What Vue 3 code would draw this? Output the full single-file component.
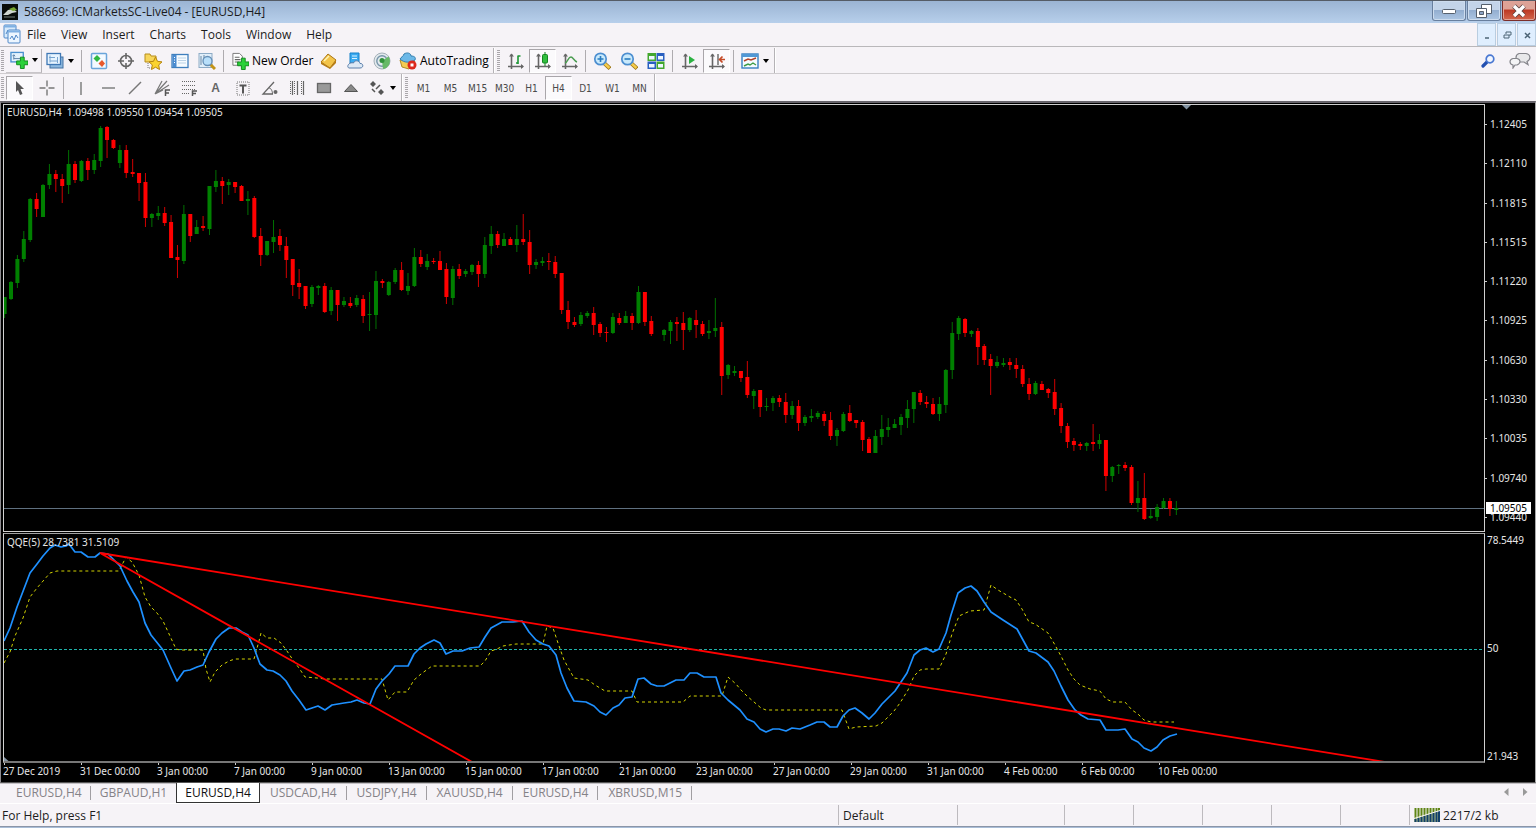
<script setup>
import { ref } from 'vue'

const menus = ['File', 'View', 'Insert', 'Charts', 'Tools', 'Window', 'Help']
const frames = ['M1', 'M5', 'M15', 'M30', 'H1', 'H4', 'D1', 'W1', 'MN']
const frame = ref('H4')
const tabs = ['EURUSD,H4', 'GBPAUD,H1', 'EURUSD,H4', 'USDCAD,H4', 'USDJPY,H4', 'XAUUSD,H4', 'EURUSD,H4', 'XBRUSD,M15']
const activeTab = ref(2)
const prices = ['1.12405', '1.12110', '1.11815', '1.11515', '1.11220', '1.10925', '1.10630', '1.10330', '1.10035', '1.09740', '1.09440']
const dates = ['27 Dec 2019', '31 Dec 00:00', '3 Jan 00:00', '7 Jan 00:00', '9 Jan 00:00', '13 Jan 00:00', '15 Jan 00:00', '17 Jan 00:00', '21 Jan 00:00', '23 Jan 00:00', '27 Jan 00:00', '29 Jan 00:00', '31 Jan 00:00', '4 Feb 00:00', '6 Feb 00:00', '10 Feb 00:00']

// colour, high, body top, body bottom, low; "-" is a bar without a drawn body
const bars = `g297,297,314,318 g281,282,299,300 g255,259,283,288 g231,239,259,262 g198,199,240,242 r193,199,209,217 g184,185,217,217 g164,174,185,189 r170,174,179,192 r174,179,186,203
g150,164,185,194 r161,164,180,183 g160,161,181,182 r158,161,170,180 g154,160,170,174 g126,128,161,167 r126,127,140,158 r139,140,148,149 g145,150,163,168 r145,150,173,178
r159,172,174,177 r173,173,183,201 r173,182,218,227 g213,214,218,227 g206,213,216,220 r207,213,223,226 r215,222,258,258 r245,257,260,278 g205,214,261,264 r214,214,236,242
g220,227,234,234 r216,226,228,231 g186,186,229,235 g170,181,187,192 r177,181,186,204 g179,182,185,195 r182,182,187,193 r185,186,201,201 g191,199,201,215 r196,198,237,238
r228,236,255,266 g241,241,255,256 g220,237,242,253 r229,236,245,251 r237,246,260,278 r259,259,285,296 r269,283,287,299 r286,286,306,309 g285,287,304,307 g285,286,288,295
r283,286,312,313 g287,290,311,315 r290,290,305,321 g297,301,305,307 r297,303,306,308 g295,298,305,307 r295,299,316,323 g292,314,315,331 g271,281,315,329 r279,281,283,288
g281,282,295,296 g268,270,282,284 r262,270,290,291 g273,286,291,295 g248,257,286,287 r250,257,264,267 g254,261,267,270 r258,261,262,264 r251,261,270,270 r263,269,297,304
g266,269,298,305 r264,269,276,279 g269,271,274,277 g264,265,272,275 r261,265,274,287 g237,245,274,278 g226,234,246,254 r231,234,245,248 g233,239,246,246 r237,239,245,245
g225,239,245,252 r214,239,242,245 r230,242,265,274 g259,262,265,269 g257,261,263,266 r253,261,262,270 r256,262,274,278 r273,273,310,314 r301,310,322,329 r317,322,325,327
g312,315,324,326 g311,313,316,318 r307,313,325,335 r322,324,333,337 r327,332,333,342 g313,317,333,334 r313,318,323,325 g311,316,323,323 r313,316,323,330 g286,292,323,324
r292,292,322,326 r316,321,334,336 - g329,330,335,341 g320,322,331,344 r317,322,324,341 r312,323,330,350 g317,318,330,332 r310,320,325,338 r321,324,334,336
g320,331,333,339 g298,328,331,337 r322,327,376,395 g364,365,375,379 g366,371,373,376 r371,371,378,382 r361,377,395,398 g389,391,396,409 r390,390,407,417 g398,406,407,411
g396,398,403,411 r395,398,402,407 r393,402,415,423 g401,406,415,419 r400,406,423,431 g415,417,423,426 g409,416,418,422 g411,413,417,419 r411,414,421,426 r412,420,436,440
g428,430,436,446 g412,414,431,432 r405,413,421,422 r420,420,423,428 r420,422,440,451 r437,439,453,453 g430,436,453,453 g415,429,437,445 g418,427,430,437 g419,424,428,428
g414,417,425,435 g400,409,418,428 g392,392,409,423 r390,393,402,405 r396,402,404,408 r398,404,414,415 g397,404,414,421 g369,370,405,413 g322,333,370,379 g316,318,334,340
r318,319,333,337 g330,331,334,337 r328,331,347,365 r344,346,360,365 r354,359,366,395 g356,362,366,368 g358,363,365,367 r358,362,365,370 r358,365,369,378 r365,369,384,387
r378,384,394,400 g381,383,394,395 r381,384,390,390 r388,389,393,398 r379,392,409,415 r403,408,426,433 r423,426,442,448 r438,441,445,451 r442,444,446,450 g442,443,446,451
r424,442,444,451 g434,440,444,449 r440,440,476,491 g466,467,476,482 g464,465,466,474 r462,465,468,471 r465,467,503,505 g481,498,503,512 r473,498,519,520 g509,516,518,519
g504,507,517,521 g498,501,508,509 r498,501,509,516 g501,508,510,515`

const candles = bars.split(/\s+/).map((bar, i) => {
  if (bar === '-') return null
  const [high, top, bottom, low] = bar.slice(1).split(',').map(Number)
  return { x: 4.6 + i * 6.403, up: bar[0] === 'g', high, top, bottom, low }
}).filter(Boolean)

const fastLine = `4,641 10,628 17,607 30,573 37,564 43,556 50,548 55,545 61,547 66,546 69,544 75,552 81,552 88,557 95,557 100,553 108,554 114,560 120,566 127,581 133,592 139,602 145,623 151,635 163,650 171,668 177,681 184,671 190,670 197,667 203,665 209,652 216,639 222,633 229,628 236,628 242,632 248,635 254,648 260,664 267,670 273,671 280,675 286,681 292,691 299,700 306,710 312,708 318,706 325,710 332,705 338,704 344,703 351,702 357,700 364,703 370,704 376,689 382,681 389,674 395,666 408,666
414,654 420,648 426,644 434,640 440,643 446,654 453,651 462,651 470,648 479,647 485,637 491,628 502,622 513,622 522,621 529,632 536,640 543,644 549,646 556,655 561,673 567,688 574,701 586,702 594,706 600,712 606,715 613,708 619,705 625,698 632,697 638,679 644,678 651,684 657,686 664,686 670,683 676,680 684,680 690,673 697,673 704,677 716,677 721,693 728,700 740,710 747,719 754,722 760,729 766,732 773,729 779,729 786,731 792,728 800,729
810,725 817,722 824,722 830,727 837,727 843,716 849,710 855,708 862,713 869,719 875,713 882,704 895,691 907,673 914,655 920,650 926,648 933,652 939,649 946,633 951,615 958,593 965,588 971,586 977,591 984,602 991,612 1003,620 1017,629 1029,651 1036,653 1048,662 1054,671 1061,686 1068,700 1075,710 1081,715 1088,719 1100,720 1106,730 1118,730 1125,729 1132,739 1138,742 1144,748 1151,751 1157,747 1163,740 1170,736 1177,734`
const slowLine = `4,663 10,652 15,636 23,618 30,597 37,588 50,573 57,571 119,571 126,557 132,562 139,575 145,597 151,607 157,613 163,621 170,636 176,649 180,650 203,650 206,669 210,682 215,672 222,665 229,661 235,659 254,659 259,641 261,633 267,638 274,638 281,643 287,651 293,660 299,668 305,677 317,678 325,679 382,679 388,700 395,692 407,692
414,680 421,674 432,666 480,666 485,661 491,651 497,649 503,646 516,644 543,644 547,626 553,628 558,643 564,660 574,678 588,680 595,685 605,691 632,691 637,702 683,702 690,696 722,696 728,677 736,684 741,690 747,696 754,702 761,708 766,710 842,710 849,729 856,727 876,726 882,723 888,717 894,711 900,703 908,690 914,676 920,670 926,669 939,669 946,654 952,634 959,616 970,611 984,610 991,585 998,590 1010,597 1016,600 1022,609 1029,622 1035,624 1048,633 1055,645 1062,658 1068,670 1074,679 1080,685 1090,689 1100,691 1106,699 1113,702 1125,702 1132,710 1138,714 1144,720 1151,722 1174,722`

const axes = '<path d="M4.5 2v15M1 14.5h15" stroke="#666" stroke-width="1.6" fill="none"/><path d="M2 4.5l2.500-3 2.500 3zM14 12l3 2.500-3 2.500z" fill="#666"/>'
const lens = '<path d="M11 11l6 5.500" stroke="#9b7415" stroke-width="4"/><path d="M11 11l5.500 5" stroke="#f5cc4b" stroke-width="2.400"/><circle cx="7.500" cy="7" r="5.700" fill="#c9e9fb" stroke="#4c8ed0" stroke-width="1.700"/>'
const plus = '<path d="M11 6.500h4v4h4v4h-4v4h-4v-4H7v-4h4z" fill="#2bd13a" stroke="#128a1e"/>'

const icons = {
  addChart: '<rect x="1" y="1.500" width="13" height="10" fill="#e4f2fd" stroke="#4a90cf" stroke-width="1.400"/><path d="M4 4v5m-1.500-3.500L4 4l1.500 1.500M4 8h7" stroke="#5a7fa5" fill="none"/>' + plus,
  profiles: '<rect x="4" y="5" width="13" height="11" fill="#8db9e0" stroke="#4573a3"/><rect x="1" y="1.500" width="13.500" height="11" fill="#e7f4ff" stroke="#3f78b5" stroke-width="1.300"/><path d="M4 3.500v7M11.500 5v6M3 5.500h6M4 9h8" stroke="#78a4cf" fill="none"/>',
  market: '<rect x="1.500" y="1.500" width="15" height="15" rx="1" fill="#f4faff" stroke="#6aa5da" stroke-width="1.500"/><path d="M3.500 6.500l3.500-3.500 3.500 3.500L7 10z" fill="#31b842"/><path d="M8.500 11.500L12 8l3 3.500-3 3.500z" fill="#e8592d"/>',
  crosshairData: '<circle cx="9" cy="9" r="5.500" fill="none" stroke="#666" stroke-width="1.600"/><path d="M9 1v6M9 11v6M1 9h6M11 9h6" stroke="#666" stroke-width="1.600"/>',
  navigator: '<path d="M1 2h5l1 2h5v6H1z" fill="#f7d65b" stroke="#b78d1c"/><path d="M4 11v5h4" stroke="#777" stroke-dasharray="1 1" fill="none"/><path d="M11.500 5l2 4.300 4.500.6-3.300 3 .8 4.600-4-2.300-4 2.300.8-4.600-3.300-3 4.500-.6z" fill="#fbd32f" stroke="#b58410"/>',
  terminal: '<rect x="1" y="2.500" width="16" height="13" fill="#f6fbff" stroke="#3f7fbd" stroke-width="1.300"/><path d="M3.500 3v12" stroke="#4a8bd0" stroke-width="4"/><path d="M3 5.500h1M3 8h1M3 10.500h1" stroke="#fff"/><path d="M7 6h8M7 8.500h8M7 11h8" stroke="#bbd2e6"/>',
  tester: '<rect x="1" y="1.500" width="13" height="14" fill="#e1eef9" stroke="#8dabc6"/><path d="M3 4v9M6 3v8" stroke="#6888a5"/><path d="M12 12l5 5" stroke="#c39418" stroke-width="3"/><circle cx="9.500" cy="9" r="4.500" fill="#b8dffa" stroke="#668fb7" stroke-width="1.300"/>',
  order: '<path d="M2 1.500h7l3 3V14H2z" fill="#fff" stroke="#777"/><path d="M4 5.500h5M4 8h6M4 10.500h4" stroke="#666" stroke-width="1.200"/>' + plus,
  editor: '<path d="M2 10l7-8 8 6-6 8z" fill="#f3c449" stroke="#a97413"/><path d="M2 10l9 6 6-8v3l-6 6-9-5z" fill="#b77c13"/><path d="M5 9l5-5" stroke="#fff3b4" stroke-width="1.500"/>',
  cloud: '<path d="M4 1h9v10H4z" fill="#3baaf0" stroke="#1680c9"/><path d="M6 4h5M6 6.500h5" stroke="#d8f2ff" stroke-width="1.200"/><path d="M3 16h11c4 0 3.500-5 0-4.500C13 8 8.500 8 7.500 11 3 9.500 0 15 3 16z" fill="#dce8f5" stroke="#5a7eaa"/>',
  signals: '<circle cx="9" cy="9" r="8" fill="#e3e9ed" stroke="#a3afb7"/><circle cx="9" cy="9" r="5.200" fill="none" stroke="#7694a8" stroke-width="1.400"/><path d="M9 9l6.500-4.500A8 8 0 0 1 10 17z" fill="#67b967"/><circle cx="9" cy="8.500" r="2.500" fill="#32923c"/>',
  auto: '<path d="M1 8l2 7 7 2 6-8z" fill="#f3cb52" stroke="#b18a23"/><path d="M1 7c1-2 3-2 4-5 3-2 7-1 7 2 4 0 5 2 4 4-5 3-11 3-15-1z" fill="#6bb8e7" stroke="#347ead"/><circle cx="13" cy="13" r="4.500" fill="#dc281c"/><rect x="11.500" y="11.500" width="3" height="3" fill="#fff"/>',
  barChart: axes + '<path d="M9 11h2M11 12V3.500M11 4h2.500" stroke="#1c9634" stroke-width="1.600" fill="none"/>',
  candleChart: axes + '<path d="M11 0v14" stroke="#168523"/><rect x="8.500" y="2.500" width="5" height="8.500" rx="1" fill="#31bf3e" stroke="#168523"/>',
  lineChart: axes + '<path d="M4 11c3-1 3-6 6-6 2 0 3 4 6 5" stroke="#4a9c50" stroke-width="1.400" fill="none"/>',
  zoomIn: lens + '<path d="M4.500 7h6M7.500 4v6" stroke="#287cc0" stroke-width="1.600"/>',
  zoomOut: lens + '<path d="M4.500 7h6" stroke="#287cc0" stroke-width="1.600"/>',
  tile: '<path d="M.5 1h8.500v8H.5zM9.500 9.500h8v7.500h-8z" fill="#42a72d"/><path d="M9.500 1h8v8h-8zM.5 9.500H9V17H.5z" fill="#295fc0"/><path d="M2 4h5.500v3.500H2zM11 4h5v3.500h-5zM2 12h5.500v3.500H2zM11 12h5v3.500h-5z" fill="#eef7ff"/>',
  scroll: axes + '<path d="M8 4l6 4-6 4z" fill="#2bb141"/>',
  shift: axes + '<path d="M10 2v11" stroke="#666" stroke-width="1.400"/><path d="M17 7.500h-5m2.500-3l-3 3 3 3" stroke="#c44a26" stroke-width="1.700" fill="none"/>',
  template: '<rect x="1" y="2" width="16" height="14" fill="#f5fbff" stroke="#377fc1" stroke-width="1.400"/><path d="M1 3.500h16" stroke="#5198d5" stroke-width="3"/><path d="M3 9l4-2 3 1 5-2" stroke="#b34127" stroke-width="1.400" fill="none"/><path d="M3 14l4-2 2 1 3-2 3 2" stroke="#3d9b46" stroke-width="1.400" fill="none"/>',
  cursor: '<path d="M5 2l8 8H9.500l2 5-2.500 1-2-5L5 13z" fill="#555"/>',
  cross: '<path d="M9 1.500v6M9 10.500v6M1.500 9h6M10.500 9h6" stroke="#777" stroke-width="1.400"/>',
  vline: '<path d="M9 3v13" stroke="#777" stroke-width="1.400"/>',
  hline: '<path d="M3 9h13" stroke="#777" stroke-width="1.400"/>',
  trend: '<path d="M3 15L15 3" stroke="#777" stroke-width="1.400"/>',
  fan: '<path d="M2 15L14 2M2 15L16 6M2 15L9 2M2 15l8-4" stroke="#777" stroke-width="1.200"/><path d="M12.500 17v-6H17M12.500 14h3.500" stroke="#555" stroke-width="1.500" fill="none"/>',
  fibo: '<path d="M2 2.500h14M2 6.500h14M2 10.500h14M2 14.500h8" stroke="#666" stroke-dasharray="1 1"/><path d="M12.500 17v-5H17M12.500 14.500h3.500" stroke="#555" stroke-width="1.500" fill="none"/>',
  textBox: '<path d="M3 3h12v13H3z" fill="none" stroke="#777" stroke-dasharray="1 1"/><path d="M5.500 6.500h7M9 6.500v8" stroke="#555" stroke-width="2"/>',
  angle: '<path d="M13 3L2 15h10" stroke="#666" stroke-width="1.300" fill="none"/><path d="M8 9c2 0 3.500 3 3.500 6" stroke="#666" fill="none"/><circle cx="14.500" cy="13" r="2" fill="#666"/>',
  cycles: '<path d="M2.500 2v14M6.500 2v14M13.500 2v14" stroke="#666" stroke-dasharray="1 1"/><path d="M4.500 2v14M9.500 2v14M15.500 2v14" stroke="#666" stroke-width="1.200"/>',
  rectangle: '<rect x="2.500" y="4.500" width="13" height="9" fill="#999" stroke="#666" stroke-width="1.300"/>',
  triangle: '<path d="M2.500 12.500h13L9 5.500z" fill="#888" stroke="#555"/>',
  arrows: '<path d="M5 2l3 3-3 3-3-3zM13 10l3 3-3 3-3-3z" fill="#555"/><path d="M4 10l3 3M8 10l4-4" stroke="#555" stroke-width="1.500" fill="none"/>'
}

const chartTools = [
  ['market', 'Market Watch'], ['crosshairData', 'Data Window'], ['navigator', 'Navigator'], ['terminal', 'Terminal'], ['tester', 'Strategy Tester']
]
const drawTools = [
  ['vline', 'Vertical Line'], ['hline', 'Horizontal Line'], ['trend', 'Trendline'], ['fan', 'Equidistant Channel'], ['fibo', 'Fibonacci Retracement'],
  ['label', 'Text'], ['textBox', 'Text Label'], ['angle', 'Trend by Angle'], ['cycles', 'Cycle Lines'], ['rectangle', 'Rectangle'], ['triangle', 'Triangle']
]
</script>

<template>
  <main class="terminal">
    <header class="title">
      <svg class="logo" width="16" height="16" viewBox="0 0 16 16" aria-hidden="true"><rect width="16" height="16" fill="#080c08" /><path d="M1 11l5-5 5-1 4 3-5 1-4 2z" fill="#cfd6cf" /><path d="M7 5l5-2 3 3-4 1z" fill="#75a52f" /><path d="M2 13h11" stroke="#75807a" /></svg>
      <h1>588669: ICMarketsSC-Live04 - [EURUSD,H4]</h1>
      <div class="window-buttons">
        <button aria-label="Minimize"><svg width="16" height="14" viewBox="0 0 16 14"><rect x="1.500" y="5.500" width="13" height="4" rx="1" fill="#fff" stroke="#56606d" /></svg></button>
        <button aria-label="Restore"><svg width="18" height="16" viewBox="0 0 18 16"><path d="M6.500 1.500h10v9h-10z" fill="#fff" stroke="#56606d" /><path d="M1.500 5.500h10v9h-10z" fill="#fff" stroke="#56606d" /><path d="M4.500 8.500h4v3h-4z" fill="#8ba3c5" stroke="#56606d" /></svg></button>
        <button class="close" aria-label="Close"><svg width="18" height="14" viewBox="0 0 18 14"><path d="M4 2l10 10M14 2L4 12" stroke="#59413f" stroke-width="5" /><path d="M4 2l10 10M14 2L4 12" stroke="#fff" stroke-width="3.400" /></svg></button>
      </div>
    </header>

    <nav class="menu" aria-label="Main menu">
      <svg class="menu-icon" width="18" height="20" viewBox="0 0 18 20" aria-hidden="true"><rect x="1" y="1" width="12" height="13" rx="1" fill="#d7eafc" stroke="#4f87c7" /><path d="M1 2.500h12" stroke="#7fb0e3" stroke-width="2" /><path d="M3 10l2-4 2 3 3-3" stroke="#4f87c7" fill="none" /><rect x="5" y="6" width="12" height="13" rx="1" fill="#edf6ff" stroke="#4f87c7" /><path d="M5 7.500h12" stroke="#7fb0e3" stroke-width="2" /><path d="M7 15l2-3 2 4 2-5 2 3" stroke="#4f87c7" fill="none" /></svg>
      <button v-for="item in menus" :key="item">{{ item }}</button>
      <div class="child-buttons">
        <button aria-label="Minimize chart"><svg width="10" height="10" viewBox="0 0 10 10"><path d="M3 8h4" stroke="#4c6475" stroke-width="1.500" /></svg></button>
        <button aria-label="Restore chart"><svg width="10" height="10" viewBox="0 0 10 10"><path d="M4 4V2h5v3H7M2 5h5v3H2z" stroke="#4c6475" fill="none" /></svg></button>
        <button aria-label="Close chart"><svg width="10" height="10" viewBox="0 0 10 10"><path d="M3 3l5 5M8 3L3 8" stroke="#4c6475" stroke-width="1.500" /></svg></button>
      </div>
    </nav>

    <section class="bar bar-top" aria-label="Standard toolbar">
      <div class="group">
        <i class="grip"></i>
        <button class="tool drop raised" aria-label="New Chart"><svg class="icon" viewBox="0 0 19 19" v-html="icons.addChart"></svg><i class="caret"></i></button>
        <button class="tool drop" aria-label="Profiles"><svg class="icon" viewBox="0 0 18 18" v-html="icons.profiles"></svg><i class="caret"></i></button>
        <i class="sep"></i>
        <button v-for="t in chartTools" :key="t[0]" class="tool" :aria-label="t[1]"><svg class="icon" viewBox="0 0 18 18" v-html="icons[t[0]]"></svg></button>
        <i class="sep"></i>
        <button class="tool order"><svg class="icon" viewBox="0 0 19 19" v-html="icons.order"></svg>New Order</button>
        <button class="tool" aria-label="MetaEditor"><svg class="icon" viewBox="0 0 18 18" v-html="icons.editor"></svg></button>
        <button class="tool" aria-label="Market"><svg class="icon" viewBox="0 0 18 18" v-html="icons.cloud"></svg></button>
        <button class="tool" aria-label="Signals"><svg class="icon" viewBox="0 0 18 18" v-html="icons.signals"></svg></button>
        <button class="tool auto"><svg class="icon" viewBox="0 0 18 18" v-html="icons.auto"></svg>AutoTrading</button>
      </div>
      <div class="group">
        <i class="grip"></i>
        <button class="tool" aria-label="Bar Chart"><svg class="icon" viewBox="0 0 18 18" v-html="icons.barChart"></svg></button>
        <button class="tool pressed" aria-label="Candlesticks"><svg class="icon" viewBox="0 0 18 18" v-html="icons.candleChart"></svg></button>
        <button class="tool" aria-label="Line Chart"><svg class="icon" viewBox="0 0 18 18" v-html="icons.lineChart"></svg></button>
        <i class="sep tight"></i>
        <button class="tool" aria-label="Zoom In"><svg class="icon" viewBox="0 0 18 18" v-html="icons.zoomIn"></svg></button>
        <button class="tool" aria-label="Zoom Out"><svg class="icon" viewBox="0 0 18 18" v-html="icons.zoomOut"></svg></button>
        <button class="tool" aria-label="Tile Windows"><svg class="icon" viewBox="0 0 18 18" v-html="icons.tile"></svg></button>
        <i class="sep"></i>
        <button class="tool" aria-label="Auto Scroll"><svg class="icon" viewBox="0 0 18 18" v-html="icons.scroll"></svg></button>
        <button class="tool pressed" aria-label="Chart Shift"><svg class="icon" viewBox="0 0 18 18" v-html="icons.shift"></svg></button>
        <i class="sep"></i>
        <button class="tool drop" aria-label="Templates"><svg class="icon" viewBox="0 0 18 18" v-html="icons.template"></svg><i class="caret"></i></button>
      </div>
      <div class="corner">
        <button aria-label="Search"><svg width="14" height="14" viewBox="0 0 14 14"><path d="M7 7l-5 5" stroke="#234fb0" stroke-width="3.200" stroke-linecap="round" /><circle cx="9" cy="5" r="3.800" fill="#f1f6ff" stroke="#4a78d2" stroke-width="1.700" /></svg></button>
        <button aria-label="Chat"><svg width="22" height="17" viewBox="0 0 22 17"><path d="M10 1.500h7c5 1 5 6 1 8l1 3-4-2.500h-5C6 8 6 3 10 1.500z" fill="#e8e8ea" stroke="#85858b" stroke-width="1.200" /><path d="M4 6.500h4c4 1 4 5 0 6.500H6l-2 3v-3C0 12 0 7.500 4 6.500z" fill="#f4f4f6" stroke="#85858b" stroke-width="1.200" /></svg></button>
      </div>
    </section>

    <section class="bar" aria-label="Line studies toolbar">
      <div class="group">
        <i class="grip"></i>
        <button class="tool pressed" aria-label="Cursor"><svg class="icon" viewBox="0 0 18 18" v-html="icons.cursor"></svg></button>
        <button class="tool" aria-label="Crosshair"><svg class="icon" viewBox="0 0 18 18" v-html="icons.cross"></svg></button>
        <i class="sep"></i>
        <button v-for="t in drawTools" :key="t[0]" class="tool" :aria-label="t[1]"><b v-if="t[0] === 'label'">A</b><svg v-else class="icon" viewBox="0 0 18 18" v-html="icons[t[0]]"></svg></button>
        <button class="tool drop" aria-label="Arrows"><svg class="icon" viewBox="0 0 18 18" v-html="icons.arrows"></svg><i class="caret"></i></button>
      </div>
      <div class="group">
        <i class="grip"></i>
        <button v-for="f in frames" :key="f" class="tool frame" :class="{ pressed: f === frame }" @click="frame = f">{{ f }}</button>
      </div>
    </section>

    <section class="chart" aria-label="EURUSD,H4 chart">
      <div class="pane price">
        <svg class="plot" viewBox="4 105 1480 426" preserveAspectRatio="none" aria-hidden="true">
          <path d="M4 508.500H1484" stroke="#5f7080" />
          <g v-for="c in candles" :key="c.x" :class="c.up ? 'up' : 'down'">
            <path :d="`M${c.x} ${c.high}V${c.low}`" class="wick" />
            <rect :x="c.x - 2" :y="c.top" width="4" :height="c.bottom - c.top" />
          </g>
          <path d="M1182 105h9l-4.500 4.500z" fill="#8494a4" />
        </svg>
        <p class="caption">EURUSD,H4&nbsp; 1.09498 1.09550 1.09454 1.09505</p>
      </div>
      <div class="scale price-scale">
        <span v-for="p in prices" :key="p">{{ p }}</span>
        <strong>1.09505</strong>
      </div>
      <div class="pane study">
        <svg class="plot" viewBox="4 534 1480 227" preserveAspectRatio="none" aria-hidden="true">
          <path d="M4 649.500H1484" class="level" />
          <polyline :points="slowLine" class="slow" />
          <polyline :points="fastLine" class="fast" />
          <path d="M100 553L472 762M100 553L1385 762" class="trend" />
          <path d="M4 757v4h4.500z" fill="#8494a4" />
        </svg>
        <p class="caption">QQE(5) 28.7381 31.5109</p>
      </div>
      <div class="scale study-scale"><span>78.5449</span><span>50</span><span>21.943</span></div>
      <div class="dates"><span v-for="d in dates" :key="d">{{ d }}</span></div>
    </section>

    <nav class="tabs" aria-label="Open charts">
      <button v-for="(t, i) in tabs" :key="i" :class="{ active: i === activeTab, before: i === activeTab - 1 }" @click="activeTab = i">{{ t }}</button>
      <div class="tab-scroll">
        <button aria-label="Scroll left"><svg width="5" height="8" viewBox="0 0 5 8"><path d="M4.500 0v8L0 4z" fill="#999" /></svg></button>
        <button aria-label="Scroll right"><svg width="5" height="8" viewBox="0 0 5 8"><path d="M0 0v8l4.500-4z" fill="#999" /></svg></button>
      </div>
    </nav>

    <footer class="status">
      <span class="help">For Help, press F1</span>
      <span class="profile">Default</span>
      <span class="wide"></span><span></span><span></span><span></span><span></span><span></span>
      <span class="traffic">
        <svg width="26" height="14" viewBox="0 0 26 14" aria-hidden="true"><path d="M1.500 0v14M4.500 0v14M7.500 0v14M10.500 0v14M13.500 0v14M16.500 0v14M19.500 0v14M22.500 0v14M25 0v14" stroke="#5f8414" stroke-width="2" /><path d="M1.500 11v3M4.500 10v4M7.500 9v5M10.500 8v6M13.500 7v7M16.500 6v8M19.500 5v9M22.500 4v10M25 3v11" stroke="#123f6b" stroke-width="2" /><path d="M0 10.500L26 2.500" stroke="#f6f3f7" /></svg>
        2217/2 kb
      </span>
    </footer>
    <div class="desk"></div>
  </main>
</template>

<style>
body { margin: 0; background: #f6f3f7; }
</style>

<style scoped>
.terminal { display: flex; flex-direction: column; height: 100vh; min-height: 480px; overflow: hidden; background: #f6f3f7; color: #1c1c1c; font: 12px/16px "Open Sans", "Noto Sans", sans-serif; }
button { appearance: none; margin: 0; padding: 0; border: 0; background: none; color: inherit; font: inherit; display: flex; align-items: center; justify-content: center; white-space: nowrap; }
p, h1 { margin: 0; font-weight: 400; }

.title { box-sizing: border-box; flex: none; height: 23px; display: flex; align-items: center; gap: 6px; padding-left: 2px; border-top: 1px solid #555c66; background: linear-gradient(#9bb4d3, #b7cfeb); }
.title h1 { font-size: 12px; line-height: 18px; }
.window-buttons { display: flex; align-self: flex-start; gap: 1px; margin-left: auto; }
.window-buttons button { box-sizing: border-box; width: 34px; height: 20px; border: 1px solid #687f9e; border-top: 0; border-radius: 0 0 3px 3px; background: linear-gradient(#c3d4e9 45%, #93aed0 50%, #adc6e3); box-shadow: inset 0 0 0 1px #cddcee; }
.window-buttons .close { border-color: #7b2f2a; background: linear-gradient(#dda296 40%, #bd3a25 50%, #d4674d); box-shadow: inset 0 0 0 1px #e0a398; }

.menu { flex: none; height: 23px; display: flex; align-items: center; gap: 15px; padding-left: 27px; border-bottom: 1px solid #b9b7ba; position: relative; }
.menu-icon { position: absolute; left: 3px; top: 1px; }
.child-buttons { display: flex; gap: 1px; align-self: stretch; margin-left: auto; }
.child-buttons button { box-sizing: border-box; width: 19px; border: 1px solid #b9cde0; background: #dfeefe; }

.bar { box-sizing: border-box; flex: none; height: 27px; display: flex; }
.bar-top { padding-top: 1px; border-bottom: 1px solid #cfcccf; }
.group { display: flex; align-items: center; padding-right: 1px; border-right: 1px solid #b5b2b6; box-shadow: 1px 0 #fff; margin-right: 2px; }
.grip { flex: none; width: 3px; height: 22px; margin: 0 2px 0 1px; background: repeating-linear-gradient(#aaa7ab 0 1px, #f6f3f7 1px 2px); }
.sep { flex: none; width: 1px; height: 22px; margin: 0 3px; background: #aeabaf; }
.sep.tight { margin: 0 2px; }
.tool { box-sizing: border-box; flex: none; width: 27px; height: 24px; }
.icon { width: 18px; height: 18px; flex: none; }
.drop { width: 36px; gap: 4px; }
.raised { border-right: 1px solid #b5b2b6; border-bottom: 1px solid #c8c5c9; }
.caret { width: 0; height: 0; border: 3px solid transparent; border-top: 4px solid #000; border-bottom: 0; }
.order, .auto { justify-content: flex-start; padding-left: 4px; gap: 3px; color: #000; }
.order { width: 87px; }
.auto { width: 97px; }
.pressed { border: 1px solid #a9a6aa; border-color: #a9a6aa #fff #fff #a9a6aa; background: #fbfafc; }
.tool b { color: #666; font: bold 12px/16px "Liberation Sans", sans-serif; }
.frame { padding-top: 2px; color: #4a4a4a; font: 10px/14px "DejaVu Sans Condensed", "DejaVu Sans", sans-serif; }
.corner { display: flex; align-items: center; gap: 14px; margin-left: auto; padding-right: 5px; }

.chart { flex: 1; min-height: 0; display: grid; grid-template-columns: minmax(0, 1fr) 50px; grid-template-rows: minmax(0, 428fr) minmax(0, 230fr) 18px; row-gap: 1px; box-sizing: border-box; border-top: 2px solid #66636a; border-left: 1px solid #8b898d; border-bottom: 1px solid #555; border-right: 1px solid #aaa; padding: 1px 0 0 2px; background: #000; color: #e6e6e6; font: 10px/14px "Noto Sans", sans-serif; }
.pane { position: relative; min-width: 0; min-height: 0; border: 1px solid #d0d0d0; }
.study { border-top-color: #a0a0a0; border-bottom: 2px solid #777; }
.plot { display: block; width: 100%; height: 100%; }
.caption { position: absolute; left: 3px; top: 0; white-space: pre; }
.study .caption { top: 1px; }
.up { fill: #008000; stroke: none; }
.down { fill: #f00; stroke: none; }
.wick { stroke-width: 1; }
.up .wick { stroke: #007000; }
.down .wick { stroke: #d00000; }
.fast, .slow, .trend { fill: none; }
.fast { stroke: #1e90ff; stroke-width: 1.7; stroke-linejoin: round; }
.slow { stroke: #d2d200; stroke-width: 1; stroke-dasharray: 3 3; }
.trend { stroke: #f00; stroke-width: 1.8; }
.level { stroke: #20b2aa; stroke-dasharray: 3 2; shape-rendering: crispEdges; }
.scale { position: relative; display: flex; flex-direction: column; justify-content: space-between; min-height: 0; }
.price-scale { padding: 13px 0 8px; }
.price-scale span { padding-left: 5px; position: relative; }
.price-scale span::before { content: ""; position: absolute; left: 0; top: 7px; width: 2px; border-top: 1px solid #ccc; }
.price-scale strong { position: absolute; left: 1px; right: 4px; bottom: 18px; padding-left: 4px; background: #fff; color: #000; font-weight: 400; line-height: 12px; }
.study-scale { padding: 0 0 0 2px; }
.dates { grid-column: 1 / -1; display: flex; }
.dates span { position: relative; flex: none; width: 77px; white-space: nowrap; line-height: 14px; }
.dates span::before { content: ""; position: absolute; left: 1px; top: -1px; height: 2px; border-left: 1px solid #ccc; }

.tabs { flex: none; height: 21px; display: flex; align-items: flex-start; border-bottom: 1px solid #fff; box-sizing: border-box; box-shadow: inset 0 1px #c4c1c5; padding-left: 7px; color: #858287; }
.tabs > button { position: relative; height: 20px; padding: 0 9px; }
.tabs > button::after { content: ""; position: absolute; right: 0; top: 3px; height: 14px; border-right: 1px solid #a19ea2; }
.tabs > .active ~ button { padding: 0 10px; }
.tabs > .before::after, .tabs > .active::after { display: none; }
.tabs > .active { box-sizing: border-box; padding: 0 8px; background: #fff; border: 1px solid #333; border-top: 0; color: #111; }
.tab-scroll { display: flex; gap: 14px; margin-left: auto; padding: 5px 8px 0 0; }

.status { flex: none; height: 22px; display: flex; line-height: 22px; }
.status span { box-sizing: border-box; width: 69px; height: 20px; margin-top: 1px; line-height: 21px; border-left: 1px solid #bdbabe; }
.status .help { flex: 1; border: 0; padding-left: 2px; }
.status .profile { width: 119px; padding-left: 4px; }
.status .wide { width: 107px; }
.status .traffic { width: 127px; display: flex; align-items: center; gap: 3px; padding-left: 4px; }
.desk { flex: none; height: 2px; box-sizing: border-box; border-top: 1px solid #8b95a8; background: #a9bdd7; }
</style>
